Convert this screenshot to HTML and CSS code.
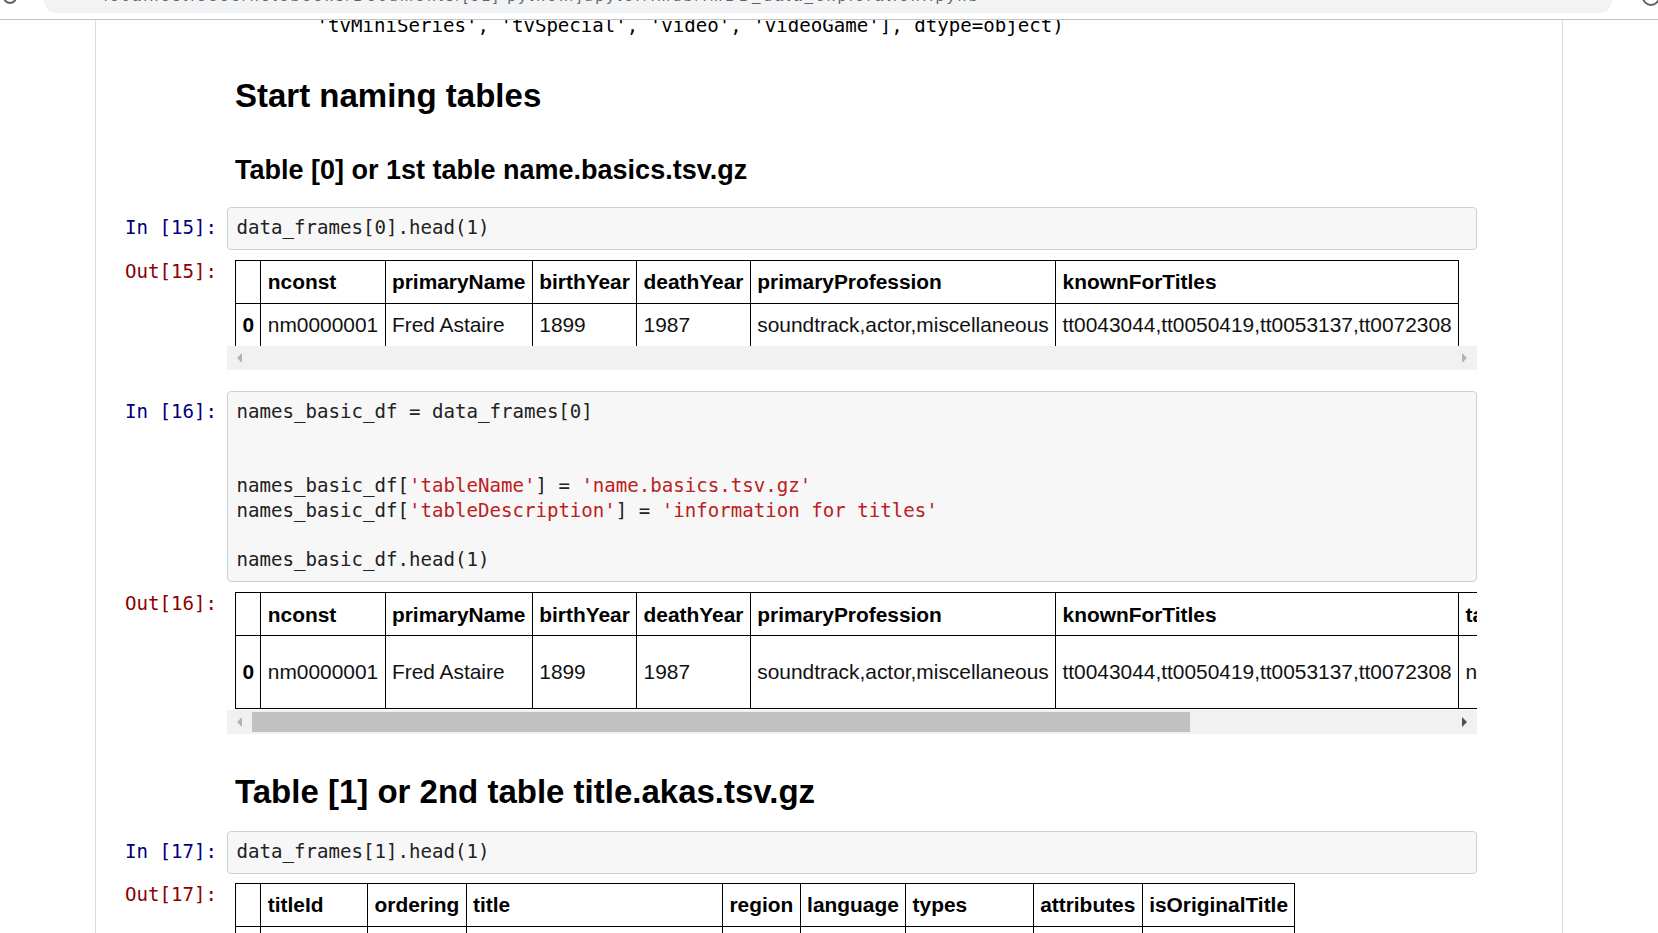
FILE: index.html
```html
<!DOCTYPE html>
<html lang="en">
<head>
<meta charset="utf-8">
<title>IMDB data exploration - Jupyter Notebook</title>
<link rel="stylesheet" href="styles.css">
</head>
<body>
<div class="chrome">
  <span class="reload"></span>
  <div class="omnibox">
    <span class="url">localhost:8888/notebooks/Documents/[01] python/jupyter/imdb/IMDB_data_exploration.ipynb</span>
    <span class="close">&#x2715;</span>
  </div>
  <span class="profile"></span>
</div>
<div class="site">
  <div class="notebook">

    <div class="cell cell-first">
      <div class="prompt"></div>
      <pre class="out-text">       'tvMiniSeries', 'tvSpecial', 'video', 'videoGame'], dtype=object)</pre>
    </div>

    <div class="cell md md-h2-first">
      <div class="prompt"></div>
      <h2 class="h2">Start naming tables</h2>
    </div>

    <div class="cell md md-h3">
      <div class="prompt"></div>
      <h3 class="h3">Table [0] or 1st table name.basics.tsv.gz</h3>
    </div>

    <div class="cell code-cell cc-15">
      <div class="prompt in-prompt">In [15]:</div>
      <div class="input-area"><pre class="code">data_frames[0].head(1)</pre></div>
    </div>
    <div class="cell output">
      <div class="prompt out-prompt">Out[15]:</div>
      <div class="out-sub">
        <div class="table-wrap">
          <table class="df">
            <thead>
              <tr><th></th><th>nconst</th><th>primaryName</th><th>birthYear</th><th>deathYear</th><th>primaryProfession</th><th>knownForTitles</th></tr>
            </thead>
            <tbody>
              <tr><th>0</th><td>nm0000001</td><td>Fred Astaire</td><td>1899</td><td>1987</td><td>soundtrack,actor,miscellaneous</td><td>tt0043044,tt0050419,tt0053137,tt0072308</td></tr>
            </tbody>
          </table>
        </div>
        <div class="hbar hbar-cover">
          <span class="btn"><span class="tri tri-left"></span></span>
          <span class="track"></span>
          <span class="btn"><span class="tri tri-right"></span></span>
        </div>
      </div>
    </div>

    <div class="cell code-cell cc-16">
      <div class="prompt in-prompt">In [16]:</div>
      <div class="input-area"><pre class="code">names_basic_df = data_frames[0]


names_basic_df[<span class="str">'tableName'</span>] = <span class="str">'name.basics.tsv.gz'</span>
names_basic_df[<span class="str">'tableDescription'</span>] = <span class="str">'information for titles'</span>

names_basic_df.head(1)</pre></div>
    </div>
    <div class="cell output">
      <div class="prompt out-prompt">Out[16]:</div>
      <div class="out-sub">
        <div class="table-wrap">
          <table class="df">
            <thead>
              <tr><th></th><th>nconst</th><th>primaryName</th><th>birthYear</th><th>deathYear</th><th>primaryProfession</th><th>knownForTitles</th><th>tableName</th><th>tableDescription</th></tr>
            </thead>
            <tbody>
              <tr><th>0</th><td>nm0000001</td><td>Fred Astaire</td><td>1899</td><td>1987</td><td>soundtrack,actor,miscellaneous</td><td>tt0043044,tt0050419,tt0053137,tt0072308</td><td>name.basics.tsv.gz</td><td>information for titles</td></tr>
            </tbody>
          </table>
        </div>
        <div class="hbar hbar-gap">
          <span class="btn"><span class="tri tri-left"></span></span>
          <span class="track"><span class="thumb" style="width: 938px"></span></span>
          <span class="btn"><span class="tri tri-right dark"></span></span>
        </div>
      </div>
    </div>

    <div class="cell md md-h2-second">
      <div class="prompt"></div>
      <h2 class="h2">Table [1] or 2nd table title.akas.tsv.gz</h2>
    </div>

    <div class="cell code-cell cc-17">
      <div class="prompt in-prompt">In [17]:</div>
      <div class="input-area"><pre class="code">data_frames[1].head(1)</pre></div>
    </div>
    <div class="cell output out-17">
      <div class="prompt out-prompt">Out[17]:</div>
      <div class="out-sub">
        <div class="table-wrap">
          <table class="df">
            <thead>
              <tr><th></th><th>titleId</th><th>ordering</th><th>title</th><th>region</th><th>language</th><th>types</th><th>attributes</th><th>isOriginalTitle</th></tr>
            </thead>
            <tbody>
              <tr><th>0</th><td>tt0000001</td><td>1</td><td>Carmencita - spanyol tánc</td><td>HU</td><td>\N</td><td>imdbDisplay</td><td>\N</td><td>0</td></tr>
            </tbody>
          </table>
        </div>
      </div>
    </div>

  </div>
</div>
</body>
</html>
```
FILE: styles.css
```css
* {
  box-sizing: border-box;
}

html, body {
  margin: 0;
  padding: 0;
  background: #ffffff;
  overflow: hidden;
  font-family: "Liberation Sans", Arial, sans-serif;
}

/* ---------- browser chrome strip ---------- */
.chrome {
  height: 20px;
  border-bottom: 1px solid #c4c4c4;
  display: flex;
  align-items: flex-start;
  overflow: hidden;
}

.reload {
  width: 14px;
  height: 14px;
  margin: -10px 0 0 3px;
  border: 2px solid #5f6368;
  border-radius: 50%;
  flex: none;
}

.omnibox {
  margin-left: 27px;
  width: 1568px;
  height: 13px;
  background: #f1f3f4;
  border-radius: 0 0 13px 13px;
  overflow: hidden;
  display: flex;
  flex: none;
}

.url {
  display: block;
  margin: -12px 0 0 60px;
  font-size: 15px;
  line-height: 16px;
  color: #5f6368;
  white-space: nowrap;
  letter-spacing: 3px;
}

.close {
  margin: -12px 18px 0 auto;
  font-size: 15px;
  line-height: 16px;
  color: #5f6368;
}

.profile {
  width: 18px;
  height: 18px;
  margin: -12px 0 0 30px;
  border: 2px solid #5f6368;
  border-radius: 50%;
  flex: none;
}

/* ---------- notebook ---------- */
.site {
  height: calc(100vh - 20px);
  overflow: hidden;
}

.notebook {
  margin-left: 95px;
  width: 1468px;
  min-height: 100%;
  border-left: 1px solid #dedede;
  border-right: 1px solid #dedede;
  display: flex;
  flex-direction: column;
}

.cell {
  display: grid;
  grid-template-columns: 131px 1250px;
  align-items: start;
}

.prompt {
  font-family: "DejaVu Sans Mono", "Liberation Mono", monospace;
  font-size: 19.1px;
  line-height: 24.7px;
  text-align: right;
  padding-right: 10px;
  white-space: pre;
}

.in-prompt {
  color: #000080;
  padding-top: 9.4px;
}

.out-prompt {
  color: #8b0000;
}

.cell-first {
  margin-top: -6px;
}

.out-text {
  margin: 0;
  padding-left: 9px;
  font-family: "DejaVu Sans Mono", "Liberation Mono", monospace;
  font-size: 19.1px;
  line-height: 24.7px;
  color: #000;
  white-space: pre;
}

/* markdown cells */
.h2,
.h3 {
  margin: 0;
  padding-left: 8px;
  color: #000;
  font-family: "Liberation Sans", Arial, sans-serif;
  font-weight: bold;
}

.h2 {
  font-size: 33px;
  line-height: 38px;
}

.h3 {
  font-size: 27px;
  line-height: 31px;
}

.md-h2-first {
  margin-top: 38.5px;
}

.md-h3 {
  margin-top: 39.4px;
}

.md-h2-second {
  margin-top: 38.5px;
}

/* code cells */
.cc-15 {
  margin-top: 21.2px;
}

.cc-16 {
  margin-top: 21px;
}

.cc-17 {
  margin-top: 19.8px;
}

.input-area {
  background: #f7f7f7;
  border: 1px solid #cfcfcf;
  border-radius: 4px;
  padding: 8.4px 8.5px;
}

.code {
  margin: 0;
  font-family: "DejaVu Sans Mono", "Liberation Mono", monospace;
  font-size: 19.1px;
  line-height: 24.7px;
  color: #222;
  white-space: pre;
}

.str {
  color: #ba2121;
}

/* outputs */
.output {
  margin-top: 10px;
}

.output.out-17 {
  margin-top: 9px;
}

.out-sub {
  width: 1250px;
}

.table-wrap {
  overflow: hidden;
  padding-left: 8px;
}

.df {
  border-collapse: collapse;
  font-family: "Liberation Sans", Arial, sans-serif;
  font-size: 20.9px;
  line-height: 29.6px;
  color: #000;
}

.df th,
.df td {
  border: 1px solid #000;
  padding: 6.2px 6.4px;
  text-align: left;
  vertical-align: middle;
}

.df th {
  font-weight: bold;
}

.df td {
  font-weight: normal;
  color: #111;
}

/* horizontal scrollbar */
.hbar {
  display: flex;
  height: 24px;
  background: #f1f1f1;
  position: relative;
}

.hbar-cover {
  margin-top: -1.5px;
}

.hbar-gap {
  margin-top: 1.5px;
}

.btn {
  width: 25px;
  flex: none;
  display: flex;
  align-items: center;
  justify-content: center;
}

.tri {
  width: 0;
  height: 0;
  border-top: 5px solid transparent;
  border-bottom: 5px solid transparent;
}

.tri-left {
  border-right: 5px solid #b3b3b3;
}

.tri-right {
  border-left: 5px solid #b3b3b3;
}

.tri-right.dark {
  border-left-color: #505050;
}

.track {
  flex: 1;
  display: flex;
  padding: 2px 0;
}

.thumb {
  display: block;
  background: #c1c1c1;
}
```
